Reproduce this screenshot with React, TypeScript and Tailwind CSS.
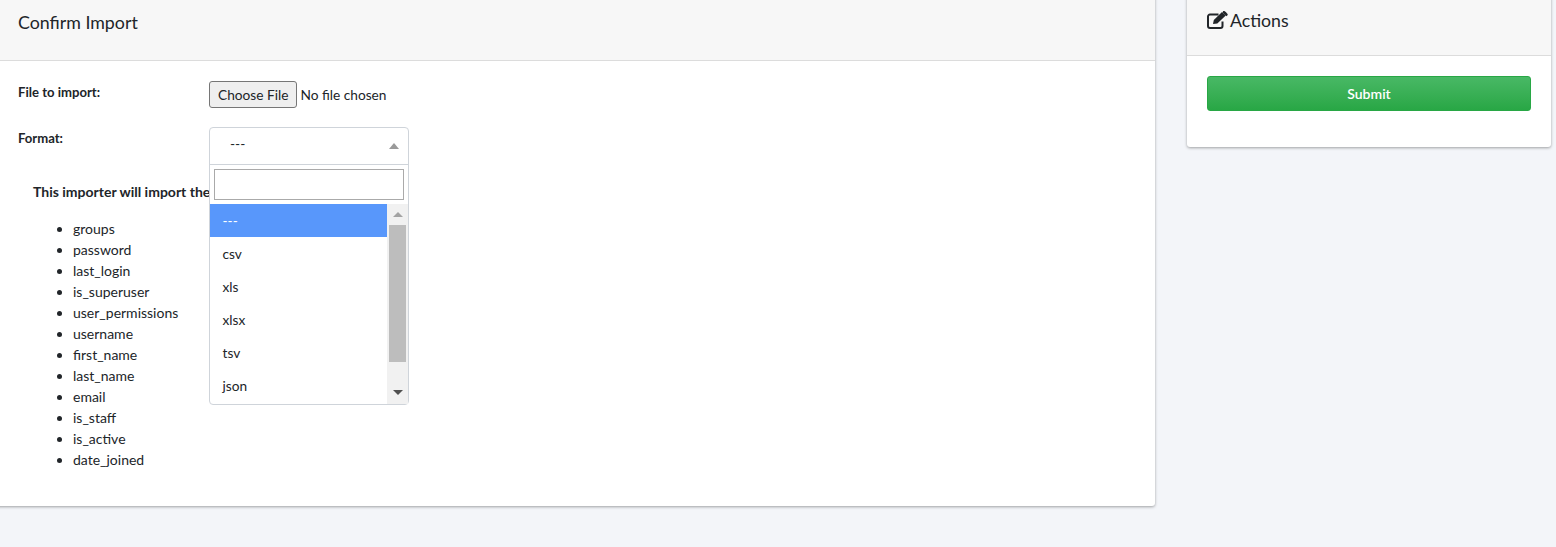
const fields = ["groups","password","last_login","is_superuser","user_permissions","username","first_name","last_name","email","is_staff","is_active","date_joined"];
const options = ["---","csv","xls","xlsx","tsv","json"];

function EditIcon() {
  return (
    <svg viewBox="0 0 21 18" className="h-[18px] w-[21px] shrink-0" fill="none">
      <path d="M15.5 10.5V15a2 2 0 0 1-2 2H3a2 2 0 0 1-2-2V5.5a2 2 0 0 1 2-2h8.5" stroke="#212529" strokeWidth="2" />
      <path d="M6 13l.8-4L15 .9 18.8 4.6 10.3 12.4z" fill="#212529" />
      <path d="M16.2 0l1-.0c.5 0 3.3 2.6 3.5 3.2v.9l-1.2 1.2-3.9-3.8z" fill="#212529" />
    </svg>
  );
}

export default function App() {
  return (
    <div className="h-[547px] w-[1556px] overflow-hidden bg-[#f3f5f9] font-['Lato','Noto_Sans',sans-serif] text-[14px] leading-[21px] text-[#212529]">
      <div className="flex items-start">
        <section className="-ml-[5px] -mt-[5px] h-[511px] w-[1160px] shrink-0 rounded-[3px] bg-white shadow-[0_1px_3px_rgba(0,0,0,0.35)]">
          <header className="h-[66px] border-b border-[#dcdcdc] bg-[#f7f7f7] pl-[23px] pt-[15px] text-[17.8px] leading-[24px]">Confirm Import</header>
          <div className="pl-[23px] pt-[20px]">
            <div className="flex">
              <label className="w-[191px] shrink-0 pt-[1px] text-[13.1px] font-bold leading-[21px]">File to import:</label>
              <input type="file" className="h-[27px] w-[200px] text-[13.7px] leading-[21px] file:mr-[3px] file:h-[27px] file:cursor-default file:rounded-[3px] file:border file:border-solid file:border-[#767676] file:bg-[#efefef] file:px-[8px] file:text-[13.7px] file:text-[#212529]" />
            </div>
            <div className="mt-[19px] flex">
              <label className="w-[191px] shrink-0 pt-[1px] text-[13.1px] font-bold leading-[21px]">Format:</label>
              <div className="relative z-10 h-[278px] w-[200px]">
                <div className="absolute inset-0 rounded-[4px] border border-[#cfd4da] bg-white">
                  <div className="relative h-[37px] border-b border-[#cfd4da] pl-[20px] pt-[5px] text-[13.7px]">
                    ---
                    <span className="absolute left-[179px] top-[15px] h-0 w-0 border-x-[5px] border-b-[6px] border-x-transparent border-b-[#9a9a9a]" />
                  </div>
                  <div className="mx-[4px] mt-[4px] h-[31px] border border-[#aaaaaa] bg-white" />
                  <div className="mt-[4px] flex h-[200px]">
                    <ul className="w-[177px] shrink-0">
                      {options.map((o, i) => (
                        <li key={o} className={`h-[33px] pl-[12.5px] pt-[6px] text-[13.7px] ${i === 0 ? "bg-[#5897fb] text-white" : "text-[#212529]"}`}>{o}</li>
                      ))}
                    </ul>
                    <div className="flex w-[21px] flex-col items-center bg-[#f1f1f1]">
                      <span className="mt-[8px] h-0 w-0 border-x-[5px] border-b-[5px] border-x-transparent border-b-[#a3a3a3]" />
                      <span className="mt-[8px] h-[137px] w-[17px] bg-[#bdbdbd]" />
                      <span className="mt-[28px] h-0 w-0 border-x-[5px] border-t-[5px] border-x-transparent border-t-[#505050]" />
                    </div>
                  </div>
                </div>
              </div>
            </div>
            <div className="-mt-[224px] pl-[15px]">
              <p className="font-bold">This importer will import the following fields:</p>
              <ul className="mt-[16px] list-disc pl-[40px] text-[14px]">
                {fields.map((f) => <li key={f}>{f}</li>)}
              </ul>
            </div>
          </div>
        </section>
        <aside className="-mt-[5px] ml-[32px] h-[152px] w-[364px] shrink-0 rounded-[3px] bg-white shadow-[0_1px_3px_rgba(0,0,0,0.35)]">
          <header className="flex h-[61px] items-start gap-[2px] border-b border-[#dcdcdc] bg-[#f7f7f7] pl-[20px] pt-[14px] text-[17.7px] leading-[24px]">
            <span className="mt-[2px]"><EditIcon /></span>
            <span>Actions</span>
          </header>
          <div className="px-[20px] pt-[20px]">
            <button className="h-[35px] w-full rounded-[3px] border border-[#28a745] bg-gradient-to-b from-[#48b865] to-[#28a745] text-[14px] font-semibold text-white">Submit</button>
          </div>
        </aside>
      </div>
    </div>
  );
}
